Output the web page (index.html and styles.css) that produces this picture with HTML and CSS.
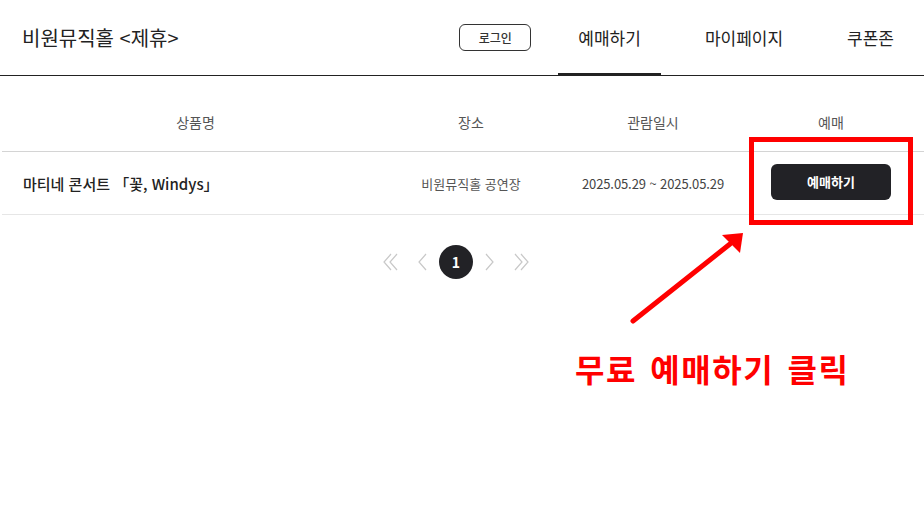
FILE: index.html
```html
<!DOCTYPE html>
<html lang="ko">
  <head>
    <meta charset="UTF-8" />
    <meta name="viewport" content="width=device-width, initial-scale=1.0" />
    <title>비원뮤직홀 예매</title>
    <link rel="stylesheet" href="styles.css">
  </head>
  <body>
    <header class="top">
      <h1 class="brand">비원뮤직홀 &lt;제휴&gt;</h1>
      <nav class="menu">
        <button class="login">로그인</button>
        <a class="tab active" href="#">예매하기</a>
        <a class="tab" href="#">마이페이지</a>
        <a class="tab" href="#">쿠폰존</a>
      </nav>
    </header>

    <main class="content">
      <div class="list">
        <div class="row head">
          <div class="cell">상품명</div>
          <div class="cell">장소</div>
          <div class="cell">관람일시</div>
          <div class="cell">예매</div>
        </div>
        <div class="row item">
          <div class="cell name">마티네 콘서트 「꽃, Windys」</div>
          <div class="cell place">비원뮤직홀 공연장</div>
          <div class="cell date">2025.05.29 ~ 2025.05.29</div>
          <div class="cell">
            <button class="book">예매하기</button>
          </div>
        </div>
      </div>

      <div class="pager">
        <span class="arrow">
          <svg width="16" height="18" viewBox="0 0 16 18"><path d="M8 1 L1 9 L8 17 M14 1 L7 9 L14 17" fill="none" stroke="#c8c8c8" stroke-width="1.2" /></svg>
        </span>
        <span class="arrow">
          <svg width="10" height="18" viewBox="0 0 10 18"><path d="M8 1 L1 9 L8 17" fill="none" stroke="#c8c8c8" stroke-width="1.2" /></svg>
        </span>
        <span class="page">1</span>
        <span class="arrow">
          <svg width="10" height="18" viewBox="0 0 10 18"><path d="M2 1 L9 9 L2 17" fill="none" stroke="#c8c8c8" stroke-width="1.2" /></svg>
        </span>
        <span class="arrow">
          <svg width="16" height="18" viewBox="0 0 16 18"><path d="M2 1 L9 9 L2 17 M8 1 L15 9 L8 17" fill="none" stroke="#c8c8c8" stroke-width="1.2" /></svg>
        </span>
      </div>
    </main>

    <!-- guide overlay -->
    <div class="mark-box"></div>
    <svg class="mark-arrow" width="924" height="507" viewBox="0 0 924 507">
      <line x1="633" y1="321" x2="730" y2="244" stroke="#f00" stroke-width="5" stroke-linecap="round" />
      <polygon points="743,233 722,235 740,253" fill="#f00" />
    </svg>
    <p class="mark-text">무료 예매하기 클릭</p>
  </body>
</html>
```

FILE: styles.css
```css
body {
  margin: 0;
  font-family: "Noto Sans CJK KR", "Noto Sans", sans-serif;
  color: #222;
  background: #fff;
  width: 924px;
  height: 507px;
  overflow: hidden;
  position: relative;
}
.top {
  height: 75px;
  border-bottom: 1px solid #222;
  display: flex;
  align-items: center;
  justify-content: space-between;
  padding: 0 10px 0 22px;
}
.brand {
  margin: 0;
  font-size: 20px;
  font-weight: 400;
  color: #222;
}
.menu {
  display: flex;
  align-items: center;
  height: 100%;
  gap: 24px;
}
.login {
  width: 72px;
  height: 27px;
  border: 1px solid #333;
  border-radius: 6px;
  background: #fff;
  font-family: inherit;
  font-size: 12px;
  font-weight: 500;
  color: #333;
  margin-right: 3px;
  padding: 0;
}
.tab {
  height: 100%;
  display: flex;
  align-items: center;
  padding: 0 20px;
  font-size: 17px;
  font-weight: 400;
  color: #222;
  text-decoration: none;
  box-sizing: border-box;
  border-bottom: 3px solid transparent;
  margin-bottom: -2px;
  padding-top: 1px;
}
.tab.active {
  border-bottom-color: #222;
}
.content {
  padding: 24px 0 0 2px;
}
.row {
  display: grid;
  grid-template-columns: 387px 164px 200px 156px;
  align-items: center;
}
.row.head {
  height: 43px;
  padding-bottom: 8px;
  border-bottom: 1px solid #d4d4d4;
  font-size: 14px;
  color: #555;
}
.row.item {
  height: 62px;
  border-bottom: 1px solid #e6e6e6;
}
.cell {
  text-align: center;
}
.cell.name {
  text-align: left;
  padding-left: 21px;
  font-size: 15px;
  font-weight: 500;
  color: #222;
}
.cell.place {
  font-size: 13px;
  color: #555;
}
.cell.date {
  font-size: 13px;
  color: #444;
  letter-spacing: -0.1px;
}
.book {
  width: 120px;
  height: 36px;
  border: none;
  border-radius: 6px;
  background: #222226;
  color: #fff;
  font-family: inherit;
  font-size: 13px;
  font-weight: 700;
  margin-bottom: 3px;
}
.pager {
  display: flex;
  justify-content: center;
  align-items: center;
  margin-top: 30px;
  padding-right: 14px;
}
.arrow {
  width: 32px;
  height: 34px;
  display: flex;
  align-items: center;
  justify-content: center;
}
.page {
  width: 34px;
  height: 34px;
  border-radius: 50%;
  background: #222226;
  color: #fff;
  font-size: 14px;
  font-weight: 700;
  display: flex;
  align-items: center;
  justify-content: center;
}
.mark-box {
  position: absolute;
  left: 749px;
  top: 137px;
  width: 154px;
  height: 78px;
  border: 5px solid #f00;
}
.mark-arrow {
  position: absolute;
  left: 0;
  top: 0;
  pointer-events: none;
}
.mark-text {
  position: absolute;
  left: 575px;
  top: 345px;
  margin: 0;
  font-size: 32px;
  font-weight: 700;
  color: #f00;
  letter-spacing: 1.5px;
  word-spacing: 3px;
}
```
